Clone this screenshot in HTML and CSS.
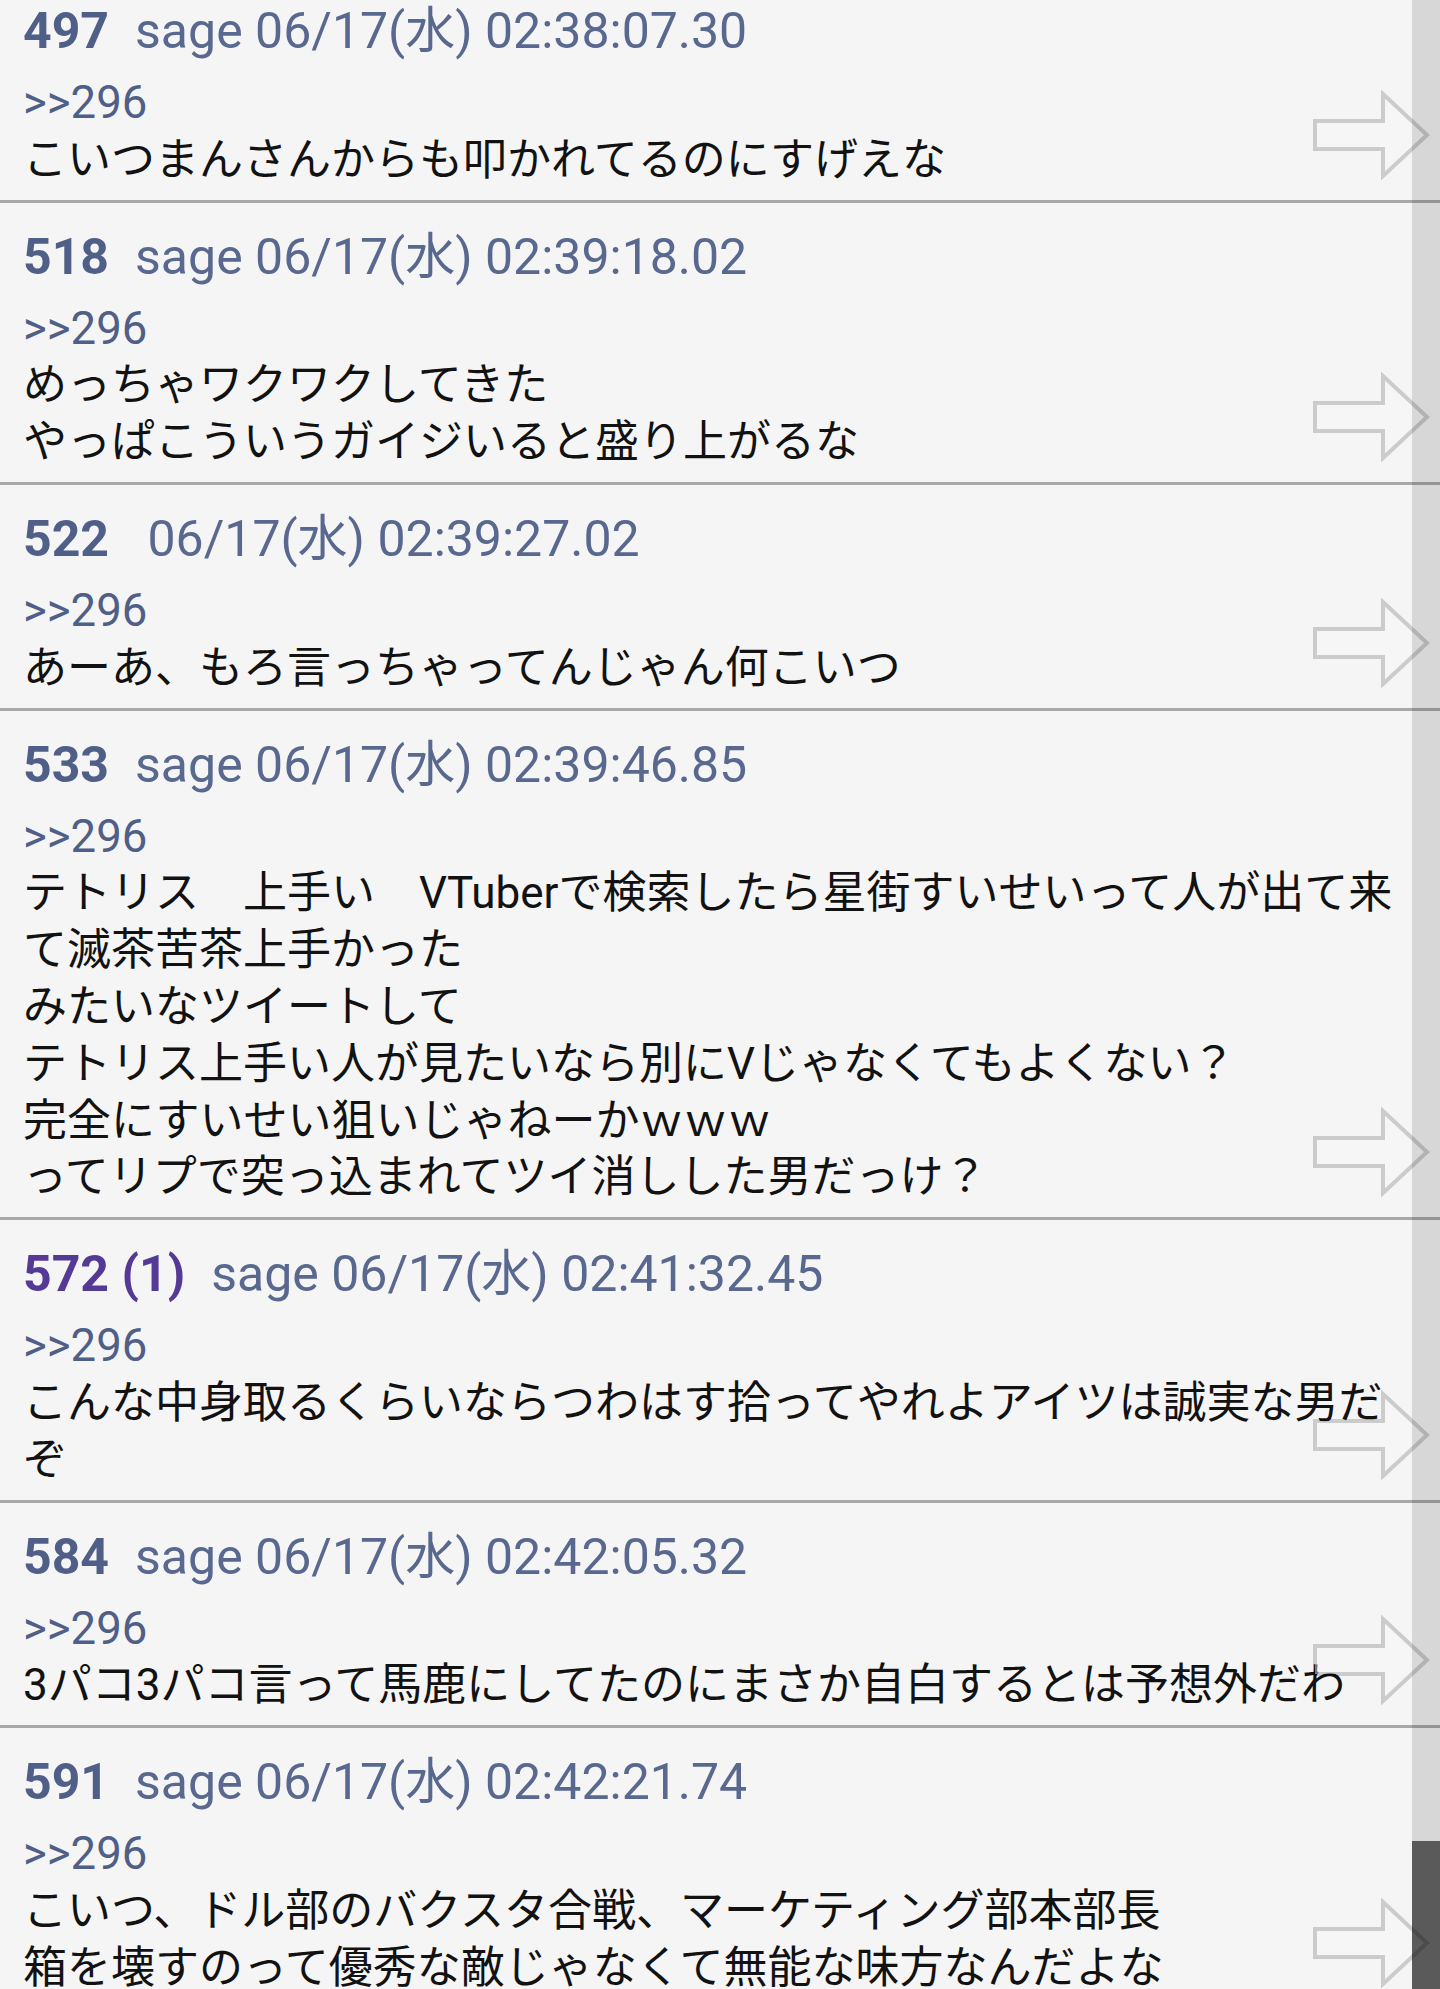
FILE: index.html
```html
<!DOCTYPE html>
<html lang="ja">
<head>
<meta charset="utf-8">
<title>thread</title>
<link rel="stylesheet" href="styles.css">
</head>
<body>
<div class="thread">
  <article class="post">
    <div class="post-head"><span class="num">497</span><span class="mail">sage</span> <span class="date">06/17(水) 02:38:07.30</span></div>
    <div class="post-body"><span class="anchor">&gt;&gt;296</span><br>こいつまんさんからも叩かれてるのにすげえな</div>
    <svg class="reply-arrow" viewBox="0 0 118 90" aria-hidden="true"><path d="M3 31 H71 V4 L115 45 L71 86 V59 H3 Z"/></svg>
  </article>
  <article class="post">
    <div class="post-head"><span class="num">518</span><span class="mail">sage</span> <span class="date">06/17(水) 02:39:18.02</span></div>
    <div class="post-body"><span class="anchor">&gt;&gt;296</span><br>めっちゃワクワクしてきた<br>やっぱこういうガイジいると盛り上がるな</div>
    <svg class="reply-arrow" viewBox="0 0 118 90" aria-hidden="true"><path d="M3 31 H71 V4 L115 45 L71 86 V59 H3 Z"/></svg>
  </article>
  <article class="post">
    <div class="post-head"><span class="num">522</span><span class="mail"></span> <span class="date">06/17(水) 02:39:27.02</span></div>
    <div class="post-body"><span class="anchor">&gt;&gt;296</span><br>あーあ、もろ言っちゃってんじゃん何こいつ</div>
    <svg class="reply-arrow" viewBox="0 0 118 90" aria-hidden="true"><path d="M3 31 H71 V4 L115 45 L71 86 V59 H3 Z"/></svg>
  </article>
  <article class="post">
    <div class="post-head"><span class="num">533</span><span class="mail">sage</span> <span class="date">06/17(水) 02:39:46.85</span></div>
    <div class="post-body"><span class="anchor">&gt;&gt;296</span><br>テトリス　上手い　VTuberで検索したら星街すいせいって人が出て来て滅茶苦茶上手かった<br>みたいなツイートして<br>テトリス上手い人が見たいなら別にVじゃなくてもよくない？<br>完全にすいせい狙いじゃねーかｗｗｗ<br>ってリプで突っ込まれてツイ消しした男だっけ？</div>
    <svg class="reply-arrow" viewBox="0 0 118 90" aria-hidden="true"><path d="M3 31 H71 V4 L115 45 L71 86 V59 H3 Z"/></svg>
  </article>
  <article class="post">
    <div class="post-head"><span class="num num-replied">572 (1)</span><span class="mail">sage</span> <span class="date">06/17(水) 02:41:32.45</span></div>
    <div class="post-body"><span class="anchor">&gt;&gt;296</span><br>こんな中身取るくらいならつわはす拾ってやれよアイツは誠実な男だぞ</div>
    <svg class="reply-arrow" viewBox="0 0 118 90" aria-hidden="true"><path d="M3 31 H71 V4 L115 45 L71 86 V59 H3 Z"/></svg>
  </article>
  <article class="post">
    <div class="post-head"><span class="num">584</span><span class="mail">sage</span> <span class="date">06/17(水) 02:42:05.32</span></div>
    <div class="post-body"><span class="anchor">&gt;&gt;296</span><br>3パコ3パコ言って馬鹿にしてたのにまさか自白するとは予想外だわ</div>
    <svg class="reply-arrow" viewBox="0 0 118 90" aria-hidden="true"><path d="M3 31 H71 V4 L115 45 L71 86 V59 H3 Z"/></svg>
  </article>
  <article class="post">
    <div class="post-head"><span class="num">591</span><span class="mail">sage</span> <span class="date">06/17(水) 02:42:21.74</span></div>
    <div class="post-body"><span class="anchor">&gt;&gt;296</span><br>こいつ、ドル部のバクスタ合戦、マーケティング部本部長<br>箱を壊すのって優秀な敵じゃなくて無能な味方なんだよな</div>
    <svg class="reply-arrow" viewBox="0 0 118 90" aria-hidden="true"><path d="M3 31 H71 V4 L115 45 L71 86 V59 H3 Z"/></svg>
  </article>
</div>
<div class="scrollbar"><div class="scrollbar-thumb"></div></div>
</body>
</html>
```
FILE: styles.css
```css
html, body {
  margin: 0;
  padding: 0;
  height: 100%;
  overflow: hidden;
  background: #f5f5f5;
}

body {
  font-family: Roboto, "Noto Sans CJK JP", sans-serif;
  color: #111111;
}

.thread {
  margin-top: -23px;
}

.post {
  position: relative;
  padding: 22px 23px 11px 23px;
  border-bottom: 3px solid #a9a9a9;
}

.post-head {
  font-size: 50px;
  line-height: 64px;
  color: #58688f;
  white-space: nowrap;
}

.num {
  font-weight: 700;
  color: #4f5f88;
  margin-right: 26px;
}

.num-replied {
  color: #553a95;
}

.post-body {
  margin-top: 12px;
  font-size: 44px;
  line-height: 56.8px;
  color: #121212;
}

.anchor {
  font-size: 45.5px;
  color: #4f5f88;
}

.reply-arrow {
  position: absolute;
  right: 10px;
  bottom: 20px;
  width: 118px;
  height: 90px;
}

.reply-arrow path {
  fill: rgba(245, 245, 245, 0.55);
  stroke: rgba(0, 0, 0, 0.17);
  stroke-width: 4;
  stroke-linejoin: miter;
}

.scrollbar {
  position: fixed;
  top: 0;
  right: 0;
  width: 28px;
  height: 100%;
  background: rgba(0, 0, 0, 0.12);
}

.scrollbar-thumb {
  position: absolute;
  left: 0;
  right: 0;
  top: 1841px;
  bottom: 0;
  background: rgba(0, 0, 0, 0.58);
}
```
